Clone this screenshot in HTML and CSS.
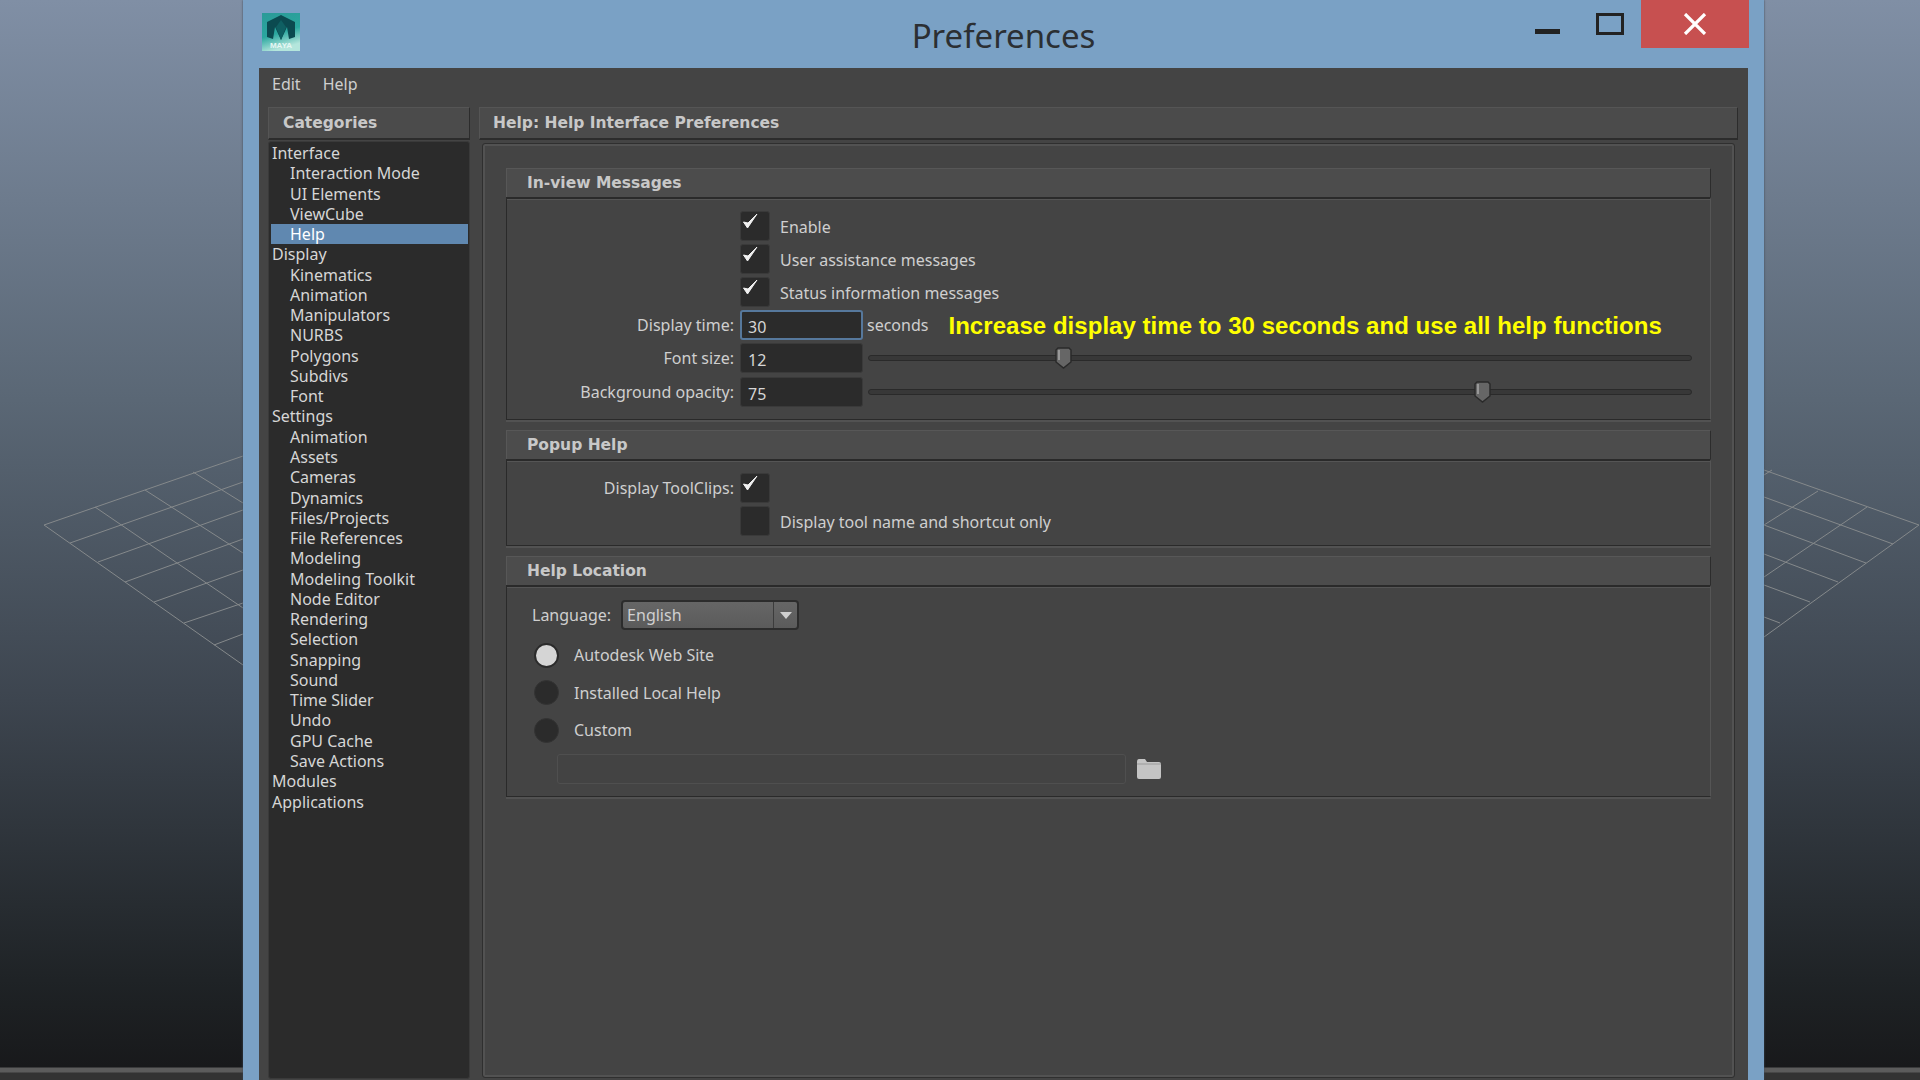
FILE: index.html
```html
<!DOCTYPE html>
<html lang="en">
<head>
  <meta charset="UTF-8">
  <title>Preferences</title>
  <link rel="stylesheet" href="styles.css">
</head>
<body>
  <!-- viewport grid behind the dialog -->
  <svg class="backdrop-grid" width="1920" height="1080" viewBox="0 0 1920 1080" fill="none" stroke="#85898b" stroke-width="1">
    <path d="M44 525L243 456M70 543L243 482M98 562L243 510M125 582L243 539M154 602L243 570M184 623L243 603M214 645L243 634"/>
    <path d="M44 525L243 665M95 507L243 608M145 490L243 553M193 472L243 503"/>
    <path d="M1919 525L1764 470M1893 544L1764 497M1866 563L1764 525M1838 582L1764 554M1810 602L1764 585M1780 623L1764 617"/>
    <path d="M1919 525L1764 637M1867 507L1764 577M1818 491L1764 525M1772 470L1764 475"/>
  </svg>

  <div class="window">
    <div class="titlebar">
      <svg class="app-logo" width="38" height="38" viewBox="0 0 38 38">
        <defs>
          <linearGradient id="logoBg" x1="0" y1="0" x2="0.3" y2="1">
            <stop offset="0" stop-color="#2b9a98"/>
            <stop offset="0.6" stop-color="#2aa79f"/>
            <stop offset="1" stop-color="#b4e6dc"/>
          </linearGradient>
        </defs>
        <rect width="38" height="38" fill="url(#logoBg)"/>
        <path d="M19 2L33 9V24L27 26L25 14L19 27L13 14L11 26L5 24V9Z" fill="#0b4a50"/>
        <path d="M14 14L19 7L24 14L19 27Z" fill="#0f5f62"/>
        <text x="19" y="35" class="logo-text">MAYA</text>
      </svg>
      <div class="title">Preferences</div>
      <div class="window-buttons">
        <div class="btn-min"></div>
        <div class="btn-max"></div>
        <div class="btn-close">
          <svg width="24" height="22" viewBox="0 0 24 22" stroke="#fff" stroke-width="3.2" fill="none">
            <path d="M2 1L22 21M22 1L2 21"/>
          </svg>
        </div>
      </div>
    </div>

    <div class="content">
      <div class="menubar">
        <span>Edit</span>
        <span>Help</span>
      </div>

      <div class="panes">
        <div class="left-pane">
          <div class="pane-head">Categories</div>
          <ul class="tree">
            <li>Interface</li>
            <li class="sub">Interaction Mode</li>
            <li class="sub">UI Elements</li>
            <li class="sub">ViewCube</li>
            <li class="sub active">Help</li>
            <li>Display</li>
            <li class="sub">Kinematics</li>
            <li class="sub">Animation</li>
            <li class="sub">Manipulators</li>
            <li class="sub">NURBS</li>
            <li class="sub">Polygons</li>
            <li class="sub">Subdivs</li>
            <li class="sub">Font</li>
            <li>Settings</li>
            <li class="sub">Animation</li>
            <li class="sub">Assets</li>
            <li class="sub">Cameras</li>
            <li class="sub">Dynamics</li>
            <li class="sub">Files/Projects</li>
            <li class="sub">File References</li>
            <li class="sub">Modeling</li>
            <li class="sub">Modeling Toolkit</li>
            <li class="sub">Node Editor</li>
            <li class="sub">Rendering</li>
            <li class="sub">Selection</li>
            <li class="sub">Snapping</li>
            <li class="sub">Sound</li>
            <li class="sub">Time Slider</li>
            <li class="sub">Undo</li>
            <li class="sub">GPU Cache</li>
            <li class="sub">Save Actions</li>
            <li>Modules</li>
            <li>Applications</li>
          </ul>
        </div>

        <div class="right-pane">
          <div class="pane-head">Help: Help Interface Preferences</div>
          <div class="settings">

            <div class="section">
              <div class="section-head">In-view Messages</div>
              <div class="section-body inview-body">
                <div class="row">
                  <div class="label"></div>
                  <div class="checkbox"><svg class="tick" width="18" height="18" viewBox="0 0 18 18"><path d="M1.5 9L5.5 15L15 1L6 10Z" fill="#f0f0f0" stroke="#f0f0f0"/></svg></div>
                  <div class="check-text">Enable</div>
                </div>
                <div class="row">
                  <div class="label"></div>
                  <div class="checkbox"><svg class="tick" width="18" height="18" viewBox="0 0 18 18"><path d="M1.5 9L5.5 15L15 1L6 10Z" fill="#f0f0f0" stroke="#f0f0f0"/></svg></div>
                  <div class="check-text">User assistance messages</div>
                </div>
                <div class="row">
                  <div class="label"></div>
                  <div class="checkbox"><svg class="tick" width="18" height="18" viewBox="0 0 18 18"><path d="M1.5 9L5.5 15L15 1L6 10Z" fill="#f0f0f0" stroke="#f0f0f0"/></svg></div>
                  <div class="check-text">Status information messages</div>
                </div>
                <div class="row">
                  <div class="label">Display time:</div>
                  <div class="field focused">30</div>
                  <div class="unit">seconds</div>
                  <div class="note">Increase display time to 30 seconds and use all help functions</div>
                </div>
                <div class="row row-font">
                  <div class="label">Font size:</div>
                  <div class="field">12</div>
                  <div class="slider">
                    <svg class="thumb" style="left: 23.6%" width="17" height="22" viewBox="0 0 17 22"><path d="M3 1H14L16 3V15L8.5 21L1 15V3Z" fill="#666" stroke="#2a2a2a" stroke-width="1.5"/><path d="M4 3V13" stroke="#aaa" stroke-width="1.5"/></svg>
                  </div>
                </div>
                <div class="row row-opacity">
                  <div class="label">Background opacity:</div>
                  <div class="field">75</div>
                  <div class="slider">
                    <svg class="thumb" style="left: 74.6%" width="17" height="22" viewBox="0 0 17 22"><path d="M3 1H14L16 3V15L8.5 21L1 15V3Z" fill="#666" stroke="#2a2a2a" stroke-width="1.5"/><path d="M4 3V13" stroke="#aaa" stroke-width="1.5"/></svg>
                  </div>
                </div>
              </div>
            </div>

            <div class="section">
              <div class="section-head">Popup Help</div>
              <div class="section-body popup-body">
                <div class="row">
                  <div class="label">Display ToolClips:</div>
                  <div class="checkbox"><svg class="tick" width="18" height="18" viewBox="0 0 18 18"><path d="M1.5 9L5.5 15L15 1L6 10Z" fill="#f0f0f0" stroke="#f0f0f0"/></svg></div>
                </div>
                <div class="row">
                  <div class="label"></div>
                  <div class="checkbox"></div>
                  <div class="check-text">Display tool name and shortcut only</div>
                </div>
              </div>
            </div>

            <div class="section">
              <div class="section-head">Help Location</div>
              <div class="section-body location-body">
                <div class="lang-row">
                  <span>Language:</span>
                  <div class="combo">
                    <div class="combo-value">English</div>
                    <div class="combo-arrow"></div>
                  </div>
                </div>
                <div class="radio-row"><div class="radio on"></div><span>Autodesk Web Site</span></div>
                <div class="radio-row"><div class="radio"></div><span>Installed Local Help</span></div>
                <div class="radio-row"><div class="radio"></div><span>Custom</span></div>
                <div class="path-row">
                  <div class="path-field"></div>
                  <svg width="25" height="22" viewBox="0 0 25 22">
                    <path d="M1 4Q1 1 3 1H9L11 4H23Q25 4 25 6V19Q25 21 23 21H3Q1 21 1 19Z" fill="#c4c4c4"/>
                    <path d="M1 6H25" stroke="#9a9a9a"/>
                  </svg>
                </div>
              </div>
            </div>

          </div>
        </div>
      </div>
    </div>
  </div>
</body>
</html>
```

FILE: styles.css
```css
html, body {
  margin: 0;
  padding: 0;
  height: 1080px;
  overflow: hidden;
}

body {
  font-family: "Noto Sans", "Open Sans", sans-serif;
  font-size: 16px;
  color: #cfcfcf;
  padding-left: 243px;
  box-sizing: border-box;
  background: linear-gradient(to bottom,
    #808fa5 0, #5a6775 400px, #3d454f 700px, #1f2326 980px, #18191b 1067px,
    #5c5c5c 1068px, #5c5c5c 1072px, #333 1073px, #333 1080px);
}

.backdrop-grid {
  position: absolute;
  left: 0;
  top: 0;
}

.window {
  position: relative;
  width: 1521px;
  height: 1080px;
  padding: 0 16px;
  box-sizing: border-box;
  background-color: #7aa1c5;
  box-shadow: 0 0 2px #3d4a58;
  display: flex;
  flex-direction: column;
}

/* title bar */
.titlebar {
  height: 68px;
  margin: 0 -16px;
  padding: 0 15px;
  display: grid;
  grid-template-columns: 1fr auto 1fr;
  flex-shrink: 0;
}

.app-logo {
  margin: 13px 0 0 4px;
}

.logo-text {
  font-family: "Liberation Sans", sans-serif;
  font-size: 8px;
  font-weight: bold;
  fill: #e6f7f4;
  text-anchor: middle;
}

.title {
  font-family: "Noto Sans", sans-serif;
  font-size: 33px;
  color: #2b2f33;
  line-height: 72px;
}

.window-buttons {
  display: flex;
  justify-content: flex-end;
  align-items: flex-start;
}

.btn-min {
  width: 25px;
  height: 5px;
  margin-top: 29px;
  background-color: #222;
}

.btn-max {
  width: 22px;
  height: 16px;
  margin: 13px 17px 0 36px;
  border: 3px solid #222;
}

.btn-close {
  width: 108px;
  height: 48px;
  background-color: #c75050;
  display: flex;
  align-items: center;
  justify-content: center;
}

/* dialog body */
.content {
  flex: 1;
  background-color: #444;
  display: flex;
  flex-direction: column;
}

.menubar {
  height: 32px;
  padding: 0 0 7px 13px;
  display: flex;
  align-items: center;
  gap: 22px;
  flex-shrink: 0;
}

.panes {
  flex: 1;
  display: flex;
  gap: 9px;
  padding-left: 9px;
  padding-right: 10px;
}

.left-pane {
  width: 202px;
  flex-shrink: 0;
}

.right-pane {
  flex: 1;
}

.pane-head {
  height: 30px;
  line-height: 30px;
  padding-left: 14px;
  font-family: "DejaVu Sans", sans-serif;
  font-size: 15.5px;
  font-weight: bold;
  color: #c8c8c8;
  background-color: #4b4b4b;
  border-top: 1px solid #555;
  border-left: 1px solid #555;
  border-right: 1px solid #2c2c2c;
  border-bottom: 2px solid #2c2c2c;
}

.right-pane .pane-head {
  padding-left: 13px;
}

/* category tree */
.tree {
  list-style: none;
  margin: 1px 0 0 0;
  padding: 1px 1px 0 2px;
  height: 938px;
  box-sizing: border-box;
  background-color: #2b2b2b;
  border: 1px solid #3a3a3a;
  border-radius: 3px;
}

.tree li {
  height: 20.28px;
  line-height: 20px;
  padding-left: 1px;
  color: #d6d6d6;
}

.tree .sub {
  padding-left: 19px;
}

.tree .active {
  background-color: #6088b0;
  color: #fff;
}

/* settings panel */
.settings {
  margin: 3px 3px 0 3px;
  height: 935px;
  box-sizing: border-box;
  padding: 24px 23px 0 23px;
  border: 1px solid #2f2f2f;
  border-radius: 3px;
  box-shadow: inset 0 0 0 2px #525252;
}

.section {
  margin-bottom: 10px;
}

.section-head {
  height: 28px;
  line-height: 28px;
  padding-left: 20px;
  font-family: "DejaVu Sans", sans-serif;
  font-size: 15.5px;
  font-weight: bold;
  color: #c8c8c8;
  background-color: #4c4c4c;
  border-top: 1px solid #575757;
  border-left: 1px solid #575757;
  border-right: 1px solid #2c2c2c;
}

.section-body {
  box-sizing: border-box;
  border: 1px solid #2a2a2a;
  border-top-width: 2px;
  border-right-color: #555;
  box-shadow: inset 0 1px 0 #555, 0 2px 0 #525252;
}

.inview-body {
  height: 223px;
  padding-top: 12px;
}

.popup-body {
  height: 87px;
  padding-top: 12px;
}

.location-body {
  height: 212px;
  padding-top: 13px;
}

.row {
  display: flex;
  align-items: center;
  height: 30px;
  margin-bottom: 3px;
}

.row-font {
  margin-top: 2px;
  margin-bottom: 4px;
}

.label {
  width: 227px;
  margin-right: 6px;
  padding-bottom: 1px;
  text-align: right;
  flex-shrink: 0;
}

.checkbox {
  width: 30px;
  height: 30px;
  box-sizing: border-box;
  background-color: #2b2b2b;
  border: 1px solid #3a3a3a;
  border-radius: 3px;
  flex-shrink: 0;
}

.tick {
  display: block;
  margin: 1px 0 0 1px;
}

.check-text {
  margin-left: 10px;
  padding-top: 1px;
}

.field {
  width: 123px;
  height: 30px;
  line-height: 32px;
  box-sizing: border-box;
  padding-left: 7px;
  background-color: #2b2b2b;
  border: 1px solid #3a3a3a;
  border-radius: 3px;
  color: #d6d6d6;
  flex-shrink: 0;
}

.field.focused {
  border: 2px solid #56789c;
  padding-left: 6px;
  line-height: 30px;
}

.unit {
  margin-left: 4px;
}

.note {
  margin-left: 20px;
  padding-top: 1px;
  font-family: "Liberation Sans", sans-serif;
  font-weight: bold;
  font-size: 24px;
  letter-spacing: 0.04px;
  color: #ffff00;
}

.slider {
  position: relative;
  width: 824px;
  height: 6px;
  margin-left: 5px;
  box-sizing: border-box;
  background-color: #383838;
  border: 1px solid #2a2a2a;
  border-radius: 3px;
}

.thumb {
  position: absolute;
  top: -9px;
  margin-left: -8px;
}

/* help location */
.lang-row {
  display: flex;
  align-items: center;
  height: 30px;
  padding-left: 25px;
  gap: 10px;
}

.combo {
  width: 178px;
  height: 30px;
  box-sizing: border-box;
  display: flex;
  background: linear-gradient(#666, #5b5b5b);
  border: 2px solid #2c2c2c;
  border-radius: 4px;
}

.combo-value {
  flex: 1;
  padding-left: 4px;
  line-height: 26px;
  color: #d0d0d0;
}

.combo-arrow {
  width: 23px;
  border-left: 1px solid #3c3c3c;
  position: relative;
}

.combo-arrow::after {
  content: "";
  position: absolute;
  left: 6px;
  top: 10px;
  border-left: 6px solid transparent;
  border-right: 6px solid transparent;
  border-top: 7px solid #d0d0d0;
}

.radio-row {
  display: flex;
  align-items: center;
  height: 25px;
  margin-top: 12.5px;
  padding-left: 27px;
}

.radio-row span {
  margin-left: 15px;
}

.radio {
  width: 25px;
  height: 25px;
  box-sizing: border-box;
  border-radius: 50%;
  background-color: #2b2b2b;
  border: 1px solid #333;
}

.radio.on {
  background-color: #d5d5d5;
  border: 2px solid #2b2b2b;
}

.path-row {
  display: flex;
  align-items: center;
  gap: 10px;
  margin-top: 11px;
  padding-left: 50px;
}

.path-field {
  width: 569px;
  height: 30px;
  box-sizing: border-box;
  border: 1px solid #4f4f4f;
  border-radius: 3px;
  background-color: #434343;
}
```
